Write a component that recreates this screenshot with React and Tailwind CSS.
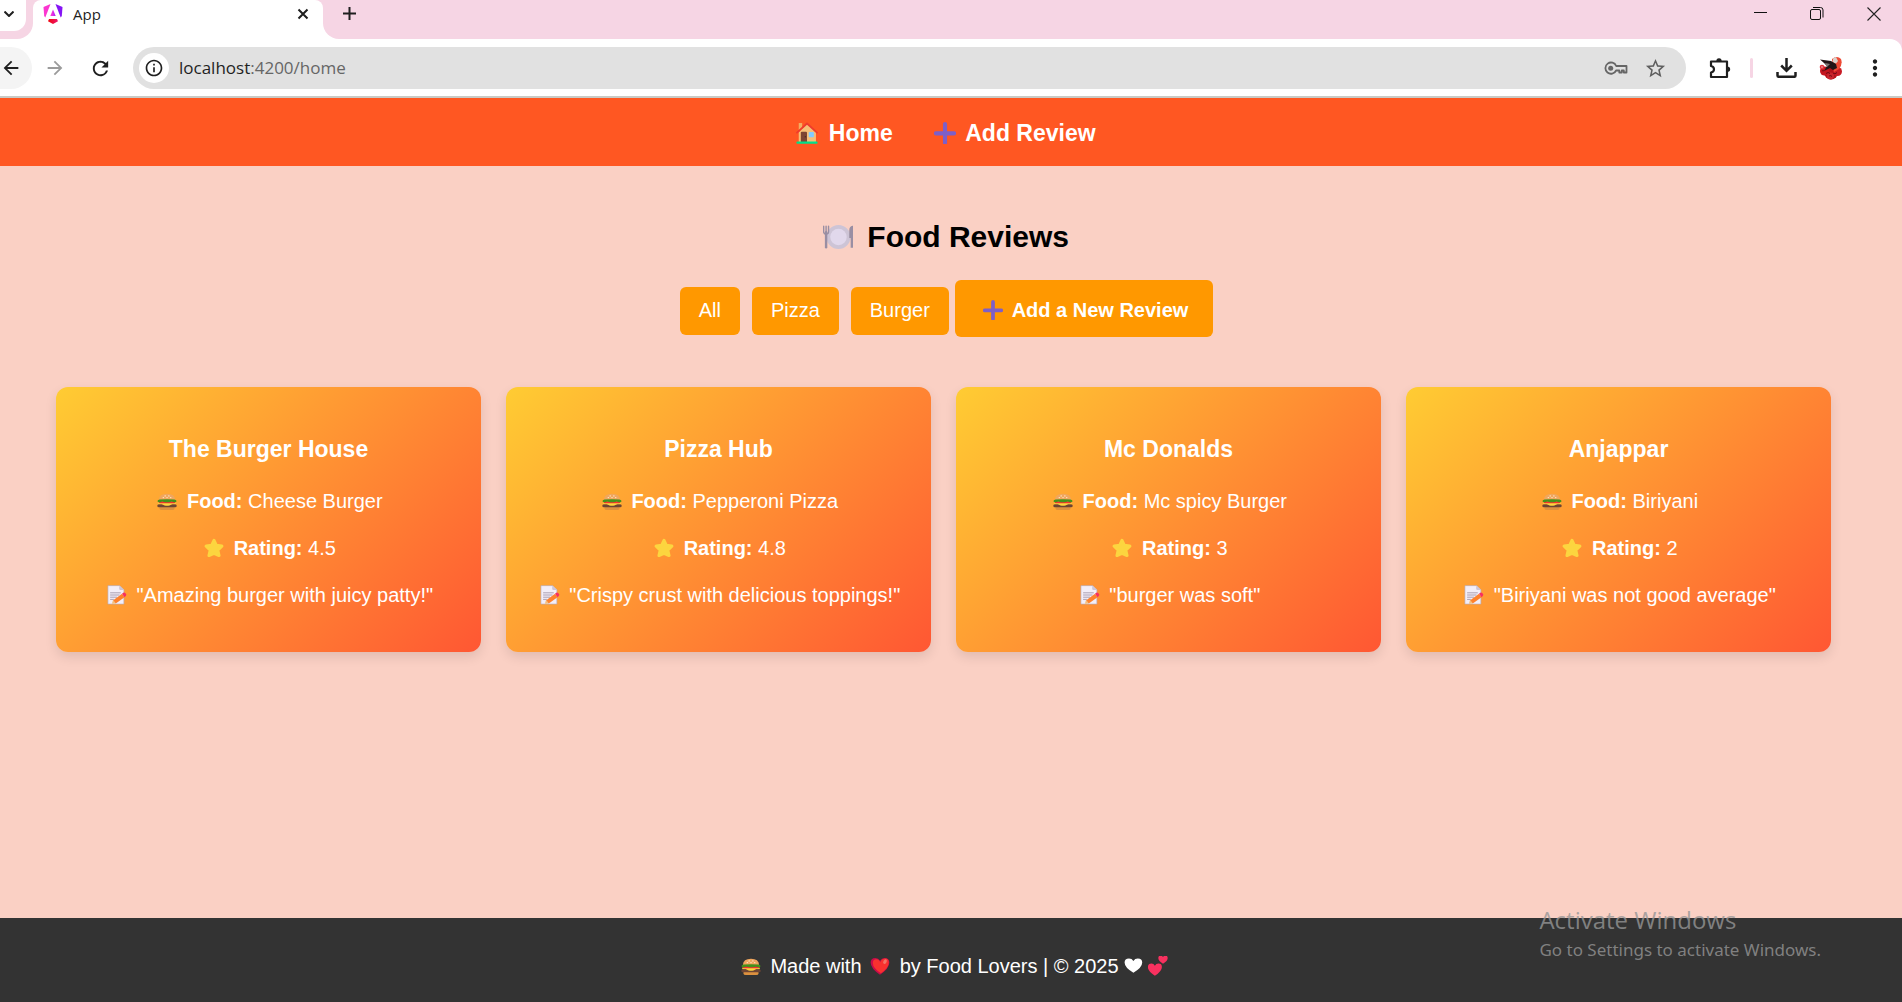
import {
  MdArrowBack,
  MdArrowForward,
  MdRefresh,
  MdInfoOutline,
  MdStarBorder,
  MdMoreVert,
} from "react-icons/md";

const ARIAL = 'font-["Liberation_Sans",Arial,sans-serif]';
const SEGOE = 'font-["Open_Sans","Noto_Sans",sans-serif]';

/* ---------- emoji drawings ---------- */

const emojiSizes = {
  md: "ml-[3px] mr-1 h-5 w-5 align-[-3px]",
  lg: "ml-[5px] mr-1 h-[22px] w-[22px] align-[-3px]",
  xl: "ml-[5px] mr-[6px] h-[30px] w-[30px] align-[-5px]",
  tight: "mr-1 h-5 w-5 align-[-3px]",
};

function Emoji({ label, size = "md", children }) {
  return (
    <svg role="img" aria-label={label} viewBox="0 0 32 32" className={`inline-block ${emojiSizes[size]}`}>
      {children}
    </svg>
  );
}

function House(props) {
  return (
    <Emoji label="house" {...props}>
      <path d="M4 1.500h5V12H4z" fill="#f3ad61" />
      <path d="M16 2 29 15v14H4V15z" fill="#f6bf77" />
      <path d="M1.500 15.500 16 2.200l14.500 13.300" fill="none" stroke="#ef3b2d" strokeWidth="2.600" strokeLinecap="round" strokeLinejoin="round" />
      <path d="M7 15.500q0-1.500 1.500-1.500h6q1.500 0 1.500 1.500V29H7z" fill="#7d4533" />
      <circle cx="13.500" cy="21.500" r="1" fill="#4a2a22" />
      <rect x="18.500" y="14.500" width="7.500" height="7.500" rx="1" fill="#83cbff" />
      <rect x="0.500" y="28.500" width="31" height="3" rx="1.500" fill="#00e08a" />
    </Emoji>
  );
}

function Plus(props) {
  return (
    <Emoji label="plus" {...props}>
      <path d="M16 3v27M2.800 16.500h26.400" stroke="#7d5fc8" strokeWidth="6" strokeLinecap="round" />
    </Emoji>
  );
}

function Plate(props) {
  return (
    <Emoji label="fork and knife with plate" {...props}>
      <circle cx="16.500" cy="16" r="12.800" fill="#cdc4d6" />
      <circle cx="16.500" cy="16" r="8.800" fill="#e1d8ec" />
      <path d="M3.300 11v16" stroke="#998ea3" strokeWidth="2.600" strokeLinecap="round" />
      <path d="M0.700 4.500v6q0 2.500 2.600 2.500t2.600-2.500v-6M3.300 4.500v7" fill="none" stroke="#998ea3" strokeWidth="1.500" strokeLinecap="round" />
      <path d="M31.500 4q-3.500.5-3.500 5v8h1.500v10.500H32V4z" fill="#998ea3" />
    </Emoji>
  );
}

function Burger(props) {
  return (
    <Emoji label="hamburger" {...props}>
      <path d="M3 14.500Q3.500 4.500 16 4.500t13 10z" fill="#f0a65e" />
      <path d="M4 25h24v2.500q0 3-3.500 3h-17q-3.500 0-3.500-3z" fill="#dc913f" />
      <rect x="0.500" y="21" width="31" height="5" rx="2.500" fill="#6d4534" />
      <path d="M3 18.500h26L20 23q-4 1-8 0z" fill="#fcd53f" />
      <path d="M2 18.500h28v2.500H2z" fill="#fcd53f" />
      <rect x="3" y="16.500" width="26" height="3" rx="1.500" fill="#f8312f" />
      <path d="M1 17q-1-2.500 3-3.500 12-1 24 0 4 1 3 3.500-2 1.500-5 .5-3-1.500-5 0-5 1-10 0-2-1.500-5 0-3 1-5-.5z" fill="#44911b" />
      <g fill="#fff3dc">
        <circle cx="10" cy="10.500" r="1" />
        <circle cx="13" cy="7.800" r="1" />
        <circle cx="16" cy="10.500" r="1" />
        <circle cx="19" cy="7.800" r="1" />
        <circle cx="22" cy="10.500" r="1" />
      </g>
    </Emoji>
  );
}

function Star(props) {
  return (
    <Emoji label="star" {...props}>
      <path
        d="M16 4 19.500 11.500 28.500 13 22 19.500 24 28 16 24.500 8 28 10 19.500 3.500 13 12.500 11.500z"
        fill="#fcd53f"
        stroke="#fcd53f"
        strokeWidth="5"
        strokeLinejoin="round"
      />
    </Emoji>
  );
}

function Memo(props) {
  return (
    <Emoji label="memo" {...props}>
      <path d="M1.500 1h19L27 7.500v23H1.500z" fill="#f3eef8" stroke="#b4acbc" strokeWidth="1" />
      <path d="M19.500 1 27 8h-5.500q-2 0-2-2z" fill="#cdc4d6" />
      <path d="M5 12.500h17M5 16h15M5 19.500h11M5 23h6" stroke="#998ea3" strokeWidth="1.300" />
      <path d="M8.500 29.500 10 24.500 13.500 29z" fill="#f3c07b" stroke="#f3c07b" strokeLinejoin="round" />
      <path d="m10 24.500 14-10.500 4 5.500L14 29.500z" fill="#ff822d" />
      <path d="m24 14 2-1.800q2-1 3.500.8l1 1.500q1 2-.5 3l-2 2z" fill="#f8315f" />
    </Emoji>
  );
}

const HEART = "M16 30Q1 20 1 10.500 1 3 8.500 3 13.500 3 16 7.500 18.500 3 23.500 3 31 3 31 10.500 31 20 16 30z";

function RedHeart(props) {
  return (
    <Emoji label="red heart" {...props}>
      <path d={HEART} fill="#ca0b4a" />
      <path d="M17.500 27.500Q4.500 19 4.500 11q0-6 5.500-6 4.500 0 6.500 5Q19 4 24 4q6 0 6 6.500 0 9-12.500 17z" fill="#f8312f" />
      <ellipse cx="24" cy="9" rx="2.500" ry="4" transform="rotate(30 24 9)" fill="#f37366" />
    </Emoji>
  );
}

function WhiteHeart(props) {
  return (
    <Emoji label="white heart" {...props}>
      <path d={HEART} fill="#fff" transform="translate(0 1.500) scale(.94 .84)" />
    </Emoji>
  );
}

function TwoHearts(props) {
  return (
    <Emoji label="two hearts" {...props}>
      <path d={HEART} fill="#f8315f" transform="translate(-1 10) scale(.75 .72)" />
      <path d={HEART} fill="#f8315f" transform="translate(16 -2) scale(.5 .48)" />
    </Emoji>
  );
}

/* ---------- browser chrome ---------- */

function AngularLogo() {
  return (
    <svg aria-hidden="true" viewBox="0 0 20 20" className="h-5 w-5">
      <defs>
        <linearGradient id="ngA" x1="0" y1="0" x2="1" y2="0">
          <stop offset="0" stopColor="#ff41c8" />
          <stop offset="0.500" stopColor="#e22ae8" />
          <stop offset="1" stopColor="#a11cf8" />
        </linearGradient>
        <linearGradient id="ngB" x1="0" y1="0" x2="1" y2="0">
          <stop offset="0" stopColor="#f0060b" />
          <stop offset="1" stopColor="#ee1670" />
        </linearGradient>
      </defs>
      <path d="M0.500 3 7.500 0 2.300 13.500 1.200 12z" fill="#fb36d0" />
      <path d="M19.500 3 12.500 0l5.200 13.500 1.100-1.500z" fill="#8514f5" />
      <path d="M10 5.500 12.700 12H7.300z" fill="url(#ngA)" />
      <path d="M6 15h8l1 2.200L10 20l-5-2.800z" fill="url(#ngB)" />
    </svg>
  );
}

function Avatar() {
  return (
    <svg aria-hidden="true" viewBox="0 0 24 24" className="h-6 w-6">
      <circle cx="12" cy="16.500" r="7" fill="#b5121b" />
      <circle cx="5.500" cy="15" r="4.500" fill="#c4161f" />
      <circle cx="18.500" cy="15.500" r="4.500" fill="#c81c26" />
      <circle cx="11.500" cy="20" r="3.500" fill="#c9252e" />
      <circle cx="3" cy="11" r="2.300" fill="#e0343a" />
      <path d="M13 3q5-4 9 0 2 5-2 10l-5 3z" fill="#ee4a35" />
      <path d="M14 2.500 17 1l2 4-2 2.500-3-1z" fill="#d9d2cc" />
      <path d="M1 3.500 12 5l5 3 1 4-4 2-3-2-6 3 3-5-3-3z" fill="#221517" />
      <path d="m6 7 5 1-3 3z" fill="#7d7775" />
      <path d="M7 17.500q2-2 4 0M14 17q2 2 4-.5M3 15q1-1 2 0M10 20q2-1 3 .5" stroke="#6d0a12" strokeWidth="1" fill="none" />
      <circle cx="3" cy="11" r="0.800" fill="#fff" opacity="0.700" />
    </svg>
  );
}

function TabStrip() {
  return (
    <div className="flex h-[39px] bg-white">
      <div className="w-[33px] rounded-br-2xl bg-[#f6d5e4]">
        <button aria-label="Search tabs" className="flex h-[31px] w-[26px] items-center rounded-br-xl bg-white pl-1">
          <svg viewBox="0 0 10 6" className="mb-1 h-[6px] w-[10px]" fill="none" stroke="#1f1f1f" strokeWidth="2">
            <path d="m0.500 0.500 4.500 4.500 4.500-4.500" />
          </svg>
        </button>
      </div>
      <div className="w-[290px] bg-linear-to-b from-[#f6d5e4] from-50% to-white to-50%">
        <div className="flex h-full items-start rounded-t-lg bg-white pl-[10px] pr-[14px] pt-1">
          <AngularLogo />
          <span className="ml-[10px] flex-1 text-[15px] leading-5 text-[#1f1f1f]">App</span>
          <button aria-label="Close tab" className="mt-1">
            <svg viewBox="0 0 12 12" className="h-3 w-3" stroke="#1f1f1f" strokeWidth="2">
              <path d="m1.500 1.500 9 9m0-9-9 9" />
            </svg>
          </button>
        </div>
      </div>
      <div className="flex flex-1 items-start justify-between rounded-bl-2xl bg-[#f6d5e4] pl-5 pr-[21px] pt-[7px]">
        <button aria-label="New tab">
          <svg viewBox="0 0 13 13" className="h-[13px] w-[13px]" stroke="#1f1f1f" strokeWidth="2">
            <path d="M6.500 0v13M0 6.500h13" />
          </svg>
        </button>
        <div className="flex gap-[43px]">
          <button aria-label="Minimize">
            <svg viewBox="0 0 14 14" className="h-[14px] w-[14px]" stroke="#111" strokeWidth="1">
              <path d="M1 5.500h13" />
            </svg>
          </button>
          <button aria-label="Restore">
            <svg viewBox="0 0 14 14" className="h-[14px] w-[14px]" fill="none" stroke="#111" strokeWidth="1">
              <rect x="0.500" y="2.500" width="10" height="10" rx="1.500" />
              <path d="M3 0.500h7.500q2.500 0 2.500 2.500V10.500" />
            </svg>
          </button>
          <button aria-label="Close">
            <svg viewBox="0 0 14 14" className="h-[14px] w-[14px]" stroke="#222" strokeWidth="1.100">
              <path d="m0.500 0.500 13 13m0-13-13 13" />
            </svg>
          </button>
        </div>
      </div>
    </div>
  );
}

const toolButton = "flex h-[42px] w-11 items-center justify-center text-[#1f1f1f]";

function Toolbar() {
  return (
    <div className="bg-[#f6d5e4]">
      <div className="flex items-center rounded-tr-xl border-b-2 border-[#c9cac5] bg-white pb-[7px] pr-[5px] pt-2">
        <button aria-label="Back" className="flex h-[42px] w-8 items-center rounded-r-full bg-[#f4f4f4] text-[#1f1f1f]">
          <MdArrowBack className="h-[22px] w-[22px]" />
        </button>
        <button aria-label="Forward" className="flex h-[42px] w-[46px] items-center justify-center text-[#9b9b9b]">
          <MdArrowForward className="h-[22px] w-[22px]" />
        </button>
        <button aria-label="Reload" className="flex h-[42px] w-11 items-center justify-center text-[#1f1f1f]">
          <MdRefresh className="h-[23px] w-[23px]" />
        </button>
        <div className="ml-[11px] flex h-[42px] flex-1 items-center rounded-full bg-[#e1e1e1] pl-[6px] pr-[19px]">
          <button aria-label="Site information" className="flex h-[30px] w-[30px] items-center justify-center rounded-full bg-white text-[#1f1f1f]">
            <MdInfoOutline className="h-5 w-5" />
          </button>
          <a href="#home" className="ml-[10px] flex-1 text-[17px] leading-6 text-[#666]">
            <span className="text-[#1f1f1f]">localhost</span>:4200/home
          </a>
          <button aria-label="Passwords">
            <svg viewBox="0 0 24 14" className="h-[14px] w-6" fill="none" stroke="#666" strokeWidth="1.800">
              <path d="M12.200 5H22.500v6.500h-2.700V9.500h-2v2h-2.500V9.500h-3.200A5.600 5.600 0 1 1 12.200 5z" strokeLinejoin="round" />
              <circle cx="6.700" cy="7.200" r="2.500" fill="#666" stroke="none" />
            </svg>
          </button>
          <button aria-label="Bookmark this tab" className="ml-4 text-[#5f5f5f]">
            <MdStarBorder className="h-[23px] w-[23px]" />
          </button>
        </div>
        <button aria-label="Extensions" className={`ml-3 ${toolButton}`}>
          <svg viewBox="0 0 22 22" className="h-[22px] w-[22px]">
            <path d="M2 4.500h16V20H2v-4.500q3-.8 3-3.300T2 9z" fill="none" stroke="#1f1f1f" strokeWidth="2.200" strokeLinejoin="round" />
            <path d="M7.300 4.500a2.700 3.200 0 0 1 5.400 0zM18 9.500a3.200 2.700 0 0 1 0 5.400z" fill="#1f1f1f" />
          </svg>
        </button>
        <span className="ml-2 h-5 w-[3px] rounded-full bg-[#f6d5e4]" />
        <button aria-label="Downloads" className={`ml-3 ${toolButton}`}>
          <svg viewBox="0 0 22 20" className="h-5 w-[22px]" fill="none" stroke="#1f1f1f" strokeWidth="2.500">
            <path d="M10.500 0v13M5.200 7.500l5.300 5.300 5.300-5.300M1.500 14v3.500q0 1.300 1.300 1.300h15.400q1.300 0 1.300-1.300V14" />
          </svg>
        </button>
        <button aria-label="Profile" className={toolButton}>
          <Avatar />
        </button>
        <button aria-label="Menu" className={toolButton}>
          <MdMoreVert className="h-[26px] w-[26px]" />
        </button>
      </div>
    </div>
  );
}

/* ---------- page ---------- */

const filters = ["All", "Pizza", "Burger"];

const reviews = [
  { name: "The Burger House", food: "Cheese Burger", rating: "4.5", text: "Amazing burger with juicy patty!" },
  { name: "Pizza Hub", food: "Pepperoni Pizza", rating: "4.8", text: "Crispy crust with delicious toppings!" },
  { name: "Mc Donalds", food: "Mc spicy Burger", rating: "3", text: "burger was soft" },
  { name: "Anjappar", food: "Biriyani", rating: "2", text: "Biriyani was not good average" },
];

function ReviewCard({ name, food, rating, text }) {
  return (
    <article className="rounded-xl bg-[linear-gradient(135deg,#ffcc33,#ff5733)] px-6 pb-[43px] pt-[49px] text-center text-[20px] leading-[27px] text-white shadow-[0_5px_12px_rgba(0,0,0,0.1)]">
      <h3 className="mb-[25px] text-[23px] font-bold">{name}</h3>
      <p className="mb-5">
        <Burger /> <strong>Food:</strong> {food}
      </p>
      <p className="mb-5">
        <Star /> <strong>Rating:</strong> {rating}
      </p>
      <p>
        <Memo /> "{text}"
      </p>
    </article>
  );
}

export default function App() {
  return (
    <div className={`relative flex min-h-screen flex-col bg-[#fad0c4] ${ARIAL}`}>
      <header className={SEGOE}>
        <TabStrip />
        <Toolbar />
      </header>

      <nav className="flex justify-center gap-9 bg-[#ff5722] pb-[19px] pr-[15px] pt-[21px] text-[23px] font-bold leading-7 text-white">
        <a href="#home">
          <House size="lg" /> Home
        </a>
        <a href="#add-review">
          <Plus size="lg" /> Add Review
        </a>
      </nav>

      <main className="flex-1 pb-12 pl-14 pr-[71px] pt-[53px]">
        <h2 className="text-center text-[30px] font-bold leading-9 text-black">
          <Plate size="xl" /> Food Reviews
        </h2>

        <div className="mt-[25px] flex items-baseline justify-center text-[20px] leading-6 text-white">
          {filters.map((f) => (
            <button key={f} className="mx-[6px] rounded-md bg-[#ff9800] px-[19px] pb-[13px] pt-[11px]">
              {f}
            </button>
          ))}
          <a href="#add-review" className="rounded-md bg-[#ff9800] px-[25px] pb-[15px] pt-[18px] font-bold">
            <Plus /> Add a New Review
          </a>
        </div>

        <div className="mt-[50px] grid grid-cols-4 gap-[25px]">
          {reviews.map((r) => (
            <ReviewCard key={r.name} {...r} />
          ))}
        </div>
      </main>

      <footer className="bg-[#333] pb-6 pl-2 pt-9 text-center text-[20px] leading-6 text-white">
        <Burger /> Made with <RedHeart /> by Food Lovers | © 2025 <WhiteHeart size="tight" />
        <TwoHearts size="tight" />
      </footer>

      <aside className={`pointer-events-none absolute bottom-[38px] right-[81px] text-[#969696]/80 ${SEGOE}`}>
        <p className="text-[24px] leading-8">Activate Windows</p>
        <p className='font-["Noto_Sans",sans-serif] text-[17px] leading-7'>Go to Settings to activate Windows.</p>
      </aside>
    </div>
  );
}
